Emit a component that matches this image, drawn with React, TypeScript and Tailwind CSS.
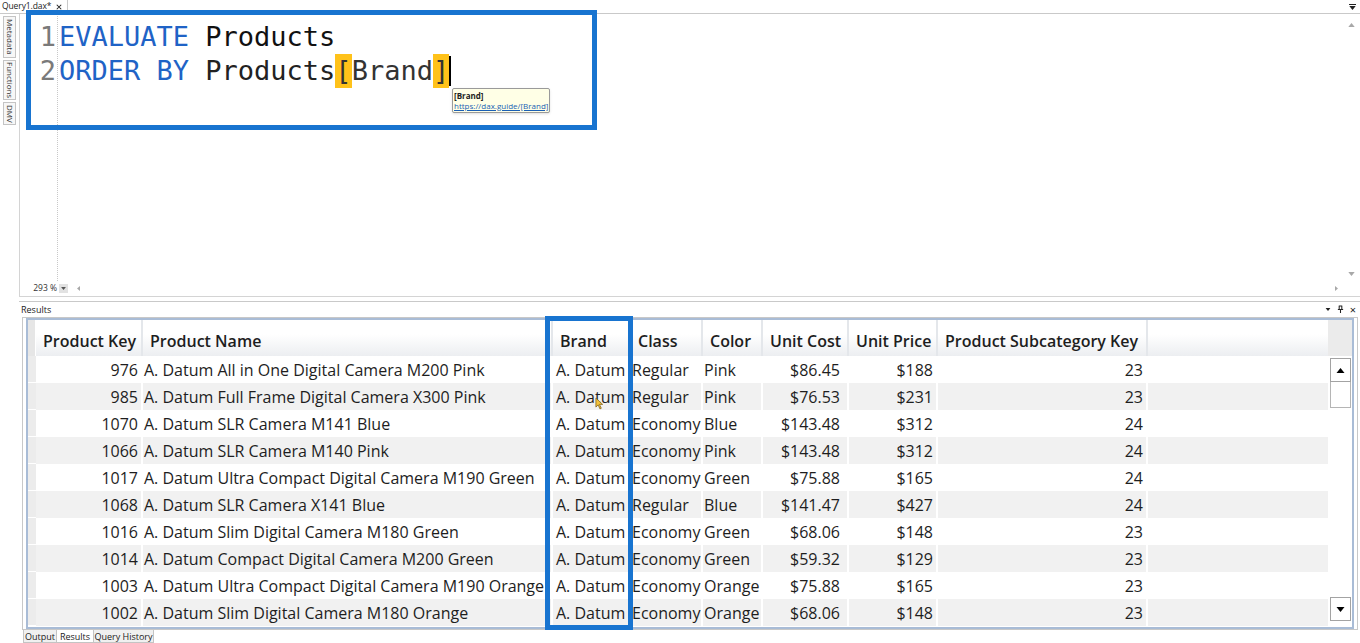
import React from 'react';

type Row = [string, string, string, string, string, string, string, string];

const rows: Row[] = [
  ['976', 'A. Datum All in One Digital Camera M200 Pink', 'A. Datum', 'Regular', 'Pink', '$86.45', '$188', '23'],
  ['985', 'A. Datum Full Frame Digital Camera X300 Pink', 'A. Datum', 'Regular', 'Pink', '$76.53', '$231', '23'],
  ['1070', 'A. Datum SLR Camera M141 Blue', 'A. Datum', 'Economy', 'Blue', '$143.48', '$312', '24'],
  ['1066', 'A. Datum SLR Camera M140 Pink', 'A. Datum', 'Economy', 'Pink', '$143.48', '$312', '24'],
  ['1017', 'A. Datum Ultra Compact Digital Camera M190 Green', 'A. Datum', 'Economy', 'Green', '$75.88', '$165', '24'],
  ['1068', 'A. Datum SLR Camera X141 Blue', 'A. Datum', 'Regular', 'Blue', '$141.47', '$427', '24'],
  ['1016', 'A. Datum Slim Digital Camera M180 Green', 'A. Datum', 'Economy', 'Green', '$68.06', '$148', '23'],
  ['1014', 'A. Datum Compact Digital Camera M200 Green', 'A. Datum', 'Economy', 'Green', '$59.32', '$129', '23'],
  ['1003', 'A. Datum Ultra Compact Digital Camera M190 Orange', 'A. Datum', 'Economy', 'Orange', '$75.88', '$165', '23'],
  ['1002', 'A. Datum Slim Digital Camera M180 Orange', 'A. Datum', 'Economy', 'Orange', '$68.06', '$148', '23'],
];

// widths + alignment per column, written out in full for tailwind
const cols = [
  { label: 'Product Key', w: 'w-[107px]', cell: 'justify-end pr-[3px]' },
  { label: 'Product Name', w: 'w-[410px]', cell: 'justify-start pl-[1px]' },
  { label: 'Brand', w: 'w-[78px]', cell: 'justify-start pl-[3px]' },
  { label: 'Class', w: 'w-[72px]', cell: 'justify-start pl-[1px]' },
  { label: 'Color', w: 'w-[60px]', cell: 'justify-start pl-[1px]' },
  { label: 'Unit Cost', w: 'w-[86px]', cell: 'justify-end pr-[7px]' },
  { label: 'Unit Price', w: 'w-[89px]', cell: 'justify-end pr-[3px]' },
  { label: 'Product Subcategory Key', w: 'w-[210px]', cell: 'justify-end pr-[3px]' },
];

const Tri = ({ dir, className = '' }: { dir: 'up' | 'down' | 'left' | 'right'; className?: string }) => {
  const pts = {
    up: '0,5 4,0 8,5',
    down: '0,0 8,0 4,5',
    left: '5,0 5,8 0,4',
    right: '0,0 0,8 5,4',
  }[dir];
  const vb = dir === 'up' || dir === 'down' ? '0 0 8 5' : '0 0 5 8';
  return (
    <svg viewBox={vb} className={className}>
      <polygon points={pts} fill="currentColor" />
    </svg>
  );
};

const VTab = ({ label, h }: { label: string; h: string }) => (
  <div
    className={`${h} w-[13px] border border-[#c4c4c4] bg-[#f7f7f7] flex items-center justify-center text-[8px] text-[#333] [writing-mode:vertical-rl]`}
  >
    {label}
  </div>
);

const mono = { fontFamily: '"DejaVu Sans Mono", monospace' };

export default function App() {
  return (
    <div
      className="relative w-[1360px] h-[643px] overflow-hidden bg-white flex flex-col text-[#222]"
      style={{ fontFamily: '"Open Sans", "Noto Sans", sans-serif' }}
    >
      {/* document tab strip */}
      <div className="h-[14px] flex items-stretch border-b border-[#c9c9c9]">
        <div className="w-[68px] h-[13px] flex items-center gap-[5px] pl-[2px] border-r border-[#c9c9c9] text-[8.5px] leading-none">
          <span className="tracking-[-0.1px]">Query1.dax*</span>
          <svg viewBox="0 0 8 8" className="w-[6px] h-[6px]">
            <path d="M1 1L7 7M7 1L1 7" stroke="#222" strokeWidth="1.4" />
          </svg>
        </div>
        <div className="flex-1" />
        <div className="w-[16px] flex flex-col items-center justify-center gap-[1px]">
          <div className="w-[7px] h-[1px] bg-[#222]" />
          <Tri dir="down" className="w-[7px] h-[4px] text-[#222]" />
        </div>
      </div>

      <div className="flex-1 flex">
        {/* left vertical tabs */}
        <div className="w-[19px] flex flex-col items-start pl-[3px] pt-[2px] gap-[2px]">
          <VTab label="Metadata" h="h-[42px]" />
          <VTab label="Functions" h="h-[40px]" />
          <VTab label="DMV" h="h-[23px]" />
        </div>

        <div className="flex-1 flex flex-col">
          {/* editor */}
          <div className="relative h-[283px] flex flex-col border-l border-b border-[#d4d4d4]">
            <div className="flex-1 flex">
              <div className="w-[38px] border-r border-dotted border-[#c8c8c8] pt-[6px] pr-[1px] text-right text-[#7a7a7a] text-[27px] leading-[34px]" style={mono}>
                <div>1</div>
                <div>2</div>
              </div>
              <div className="relative flex-1 pt-[6px] pl-[1px] text-[27px] leading-[34px] whitespace-pre" style={mono}>
                <div>
                  <span className="text-[#1f63c6]">EVALUATE</span>
                  <span className="text-[#111]"> Products</span>
                </div>
                <div className="flex items-stretch">
                  <span className="text-[#1f63c6]">ORDER BY</span>
                  <span className="text-[#222]"> Products</span>
                  <span className="bg-[#ffc21a] text-[#333]">[</span>
                  <span className="text-[#333]">Brand</span>
                  <span className="bg-[#ffc21a] text-[#333]">]</span>
                  <span className="w-[2px] bg-black my-[2px]" />
                </div>
                {/* tooltip */}
                <div
                  className="absolute left-[394px] top-[74px] w-[98px] h-[25px] border border-[#9a9a9a] rounded-[2px] bg-[#ffffe6] px-[1px] flex flex-col justify-center leading-[10px] shadow-sm"
                  style={{ fontFamily: '"Open Sans", sans-serif' }}
                >
                  <span className="text-[8px] font-bold text-[#222]">[Brand]</span>
                  <span className="text-[8px] text-[#1a5fb4] underline">https://dax.guide/[Brand]</span>
                </div>
              </div>
              <div className="w-[18px] flex flex-col items-center justify-between pt-[9px] pb-[5px] text-[#a8a8a8]">
                <Tri dir="up" className="w-[7px] h-[4px]" />
                <Tri dir="down" className="w-[7px] h-[4px]" />
              </div>
            </div>
            <div className="h-[15px] flex items-center text-[8.5px] text-[#333]">
              <div className="w-[39px] text-right pr-[2px]">293 %</div>
              <div className="w-[9px] h-[9px] bg-[#e2e2e2] flex items-center justify-center">
                <Tri dir="down" className="w-[5px] h-[3px] text-[#555]" />
              </div>
              <div className="flex-1 flex items-center justify-between pl-[9px] pr-[4px] text-[#a8a8a8]">
                <Tri dir="left" className="w-[3px] h-[5px]" />
                <Tri dir="right" className="w-[3px] h-[5px]" />
              </div>
              <div className="w-[18px]" />
            </div>
          </div>

          <div className="h-[4px]" />

          {/* results panel */}
          <div className="flex-1 flex flex-col border-t border-[#c9c9c9]">
            <div className="h-[15px] flex items-center justify-between pl-[2px] pr-[4px] text-[9px]">
              <span>Results</span>
              <div className="flex items-center gap-[6px] text-[#222]">
                <Tri dir="down" className="w-[6px] h-[3px]" />
                <svg viewBox="0 0 8 10" className="w-[7px] h-[9px]">
                  <path d="M2 1h4M2.5 1v4M5.5 1v4M1 5h6M4 5v4" stroke="currentColor" strokeWidth="1.2" fill="none" />
                </svg>
                <span className="text-[11px] leading-none">×</span>
              </div>
            </div>

            {/* grid frame */}
            <div className="h-[313px] ml-[3px] mr-[2px] border border-[#c8c8c8] pl-[3px] pr-[3px] flex">
              <div className="flex-1 border-2 border-[#a9bcd6] flex overflow-hidden text-[16px] text-[#1e1e1e]">
                <div className="flex-1 flex flex-col overflow-hidden">
                  {/* header row */}
                  <div className="h-[36px] flex shrink-0 bg-linear-to-b from-white from-40% to-[#eceef1]">
                    <div className="w-[8px] shrink-0 bg-[#e6e6e6] border-r border-white" />
                    {cols.map((c) => (
                      <div
                        key={c.label}
                        className={`${c.w} shrink-0 flex items-center pt-[5px] pl-[7px] pr-[5px] font-semibold whitespace-nowrap border-r-2 border-[#e4e7eb]`}
                      >
                        {c.label}
                      </div>
                    ))}
                    <div className="flex-1" />
                  </div>
                  {rows.map((r, i) => (
                    <div key={i} className={`h-[27px] flex shrink-0 ${i % 2 === 1 ? 'bg-[#f1f1f1]' : 'bg-white'}`}>
                      <div className="w-[8px] shrink-0 bg-[#ececec] border-b border-white" />
                      {cols.map((c, j) => (
                        <div
                          key={j}
                          className={`${c.w} shrink-0 flex items-center overflow-hidden whitespace-nowrap border-r-2 border-white ${c.cell}`}
                        >
                          {r[j]}
                        </div>
                      ))}
                      <div className="flex-1" />
                    </div>
                  ))}
                </div>
                {/* vertical scrollbar */}
                <div className="w-[24px] flex flex-col">
                  <div className="h-[36px] bg-[#ebebeb]" />
                  <div className="flex-1 flex flex-col items-center pt-[2px] pb-[6px]">
                    <div className="w-[21px] h-[24px] border border-[#a3a3a3] bg-white flex items-center justify-center">
                      <Tri dir="up" className="w-[9px] h-[5px] text-black" />
                    </div>
                    <div className="w-[21px] h-[26px] border border-t-0 border-[#b5b5b5] bg-white" />
                    <div className="flex-1" />
                    <div className="w-[21px] h-[24px] border border-[#a3a3a3] bg-white flex items-center justify-center">
                      <Tri dir="down" className="w-[9px] h-[5px] text-black" />
                    </div>
                  </div>
                </div>
              </div>
            </div>

            {/* bottom tabs */}
            <div className="h-[13px] flex items-stretch pl-[4px] text-[9px] leading-none">
              <div className="w-[34px] flex items-center justify-center bg-[#f0f0f0] border border-t-0 border-[#c4c4c4]">Output</div>
              <div className="w-[36px] flex items-center justify-center bg-white border-b border-[#c4c4c4]">Results</div>
              <div className="w-[61px] flex items-center justify-center bg-[#f0f0f0] border border-t-0 border-[#c4c4c4]">Query History</div>
            </div>
          </div>
        </div>
      </div>

      {/* annotation boxes */}
      <div className="absolute left-[26px] top-[10px] w-[571px] h-[120px] border-[5px] border-[#1874d0] pointer-events-none" />
      <div className="absolute left-[545px] top-[316px] w-[88px] h-[314px] border-[5px] border-[#1874d0] pointer-events-none" />

      {/* mouse pointer */}
      <svg viewBox="0 0 10 14" className="absolute left-[595px] top-[397px] w-[9px] h-[13px]">
        <path d="M1 1 L1 11 L3.5 8.5 L5.5 13 L7 12.3 L5 8 L8.5 8 Z" fill="#f3c13a" stroke="#7a5a10" strokeWidth="0.8" />
      </svg>
    </div>
  );
}
